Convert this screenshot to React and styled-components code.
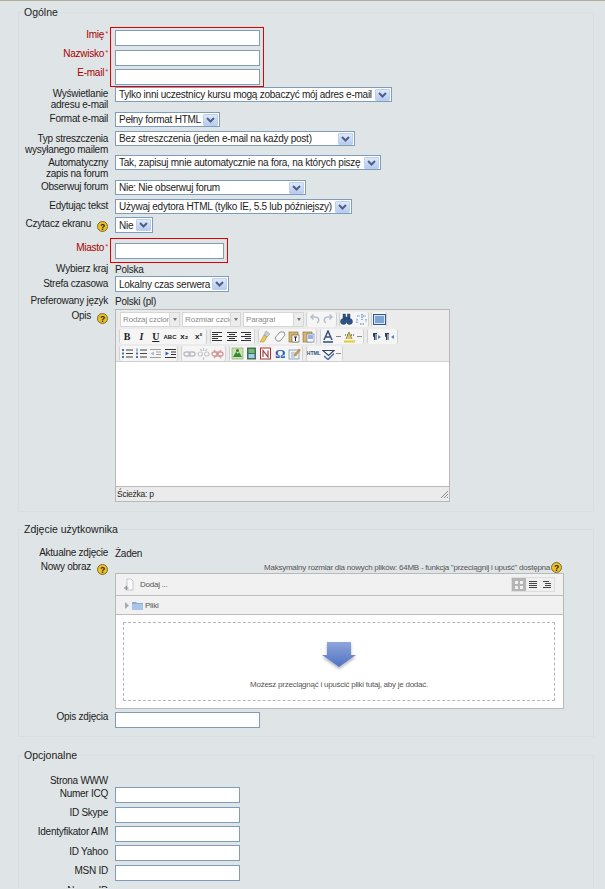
import React from 'react'
import styled, { createGlobalStyle } from 'styled-components'

const Global = createGlobalStyle`
  html, body {
    margin: 0;
    padding: 0;
    height: 889px;
    overflow: hidden;
    background: #dfe4e6;
  }
  body {
    font-family: 'Liberation Sans', Arial, sans-serif;
    font-size: 10px;
    letter-spacing: -0.25px;
    color: #1c1c1c;
  }
`

const Page = styled.div`
  border-top: 1px solid #b3ad9e;
  padding: 0 11px 0 18px;
  height: 888px;
  overflow: hidden;
  box-sizing: border-box;
`

const Section = styled.fieldset`
  margin: ${(p) => p.$top}px 0 0;
  padding: ${(p) => p.$pad}px 0 0;
  height: ${(p) => p.$h}px;
  box-sizing: border-box;
  border: 1px solid #d9dedf;
  min-width: 0;
`

const Legend = styled.legend`
  margin-left: 3px;
  padding: 0 2px;
  font-size: 10.5px;
  letter-spacing: 0;
  line-height: 12px;
`

const Row = styled.div`
  display: flex;
  align-items: flex-start;
  height: ${(p) => p.$h}px;
`

const Label = styled.div`
  width: 89px;
  height: ${(p) => (p.$h ? `${p.$h}px` : 'auto')};
  box-sizing: border-box;
  flex: none;
  margin-right: 7px;
  padding-top: ${(p) => p.$pt ?? 0}px;
  text-align: right;
  line-height: 10.5px;
  color: ${(p) => (p.$required ? '#a80000' : '#1c1c1c')};
  white-space: nowrap;

  & sup {
    color: #e03030;
    font-size: 8px;
    line-height: 0;
    vertical-align: 2px;
    margin-left: 1px;
  }
`

const Value = styled.div`
  padding-top: ${(p) => p.$pt ?? 0}px;
  line-height: 11px;
`

const Highlight = styled.div`
  margin-left: -5px;
  padding: ${(p) => p.$pad};
  border: 1px solid #e00000;
  display: flex;
  flex-direction: column;
  gap: ${(p) => p.$gap ?? 0}px;
  align-items: flex-start;
`

const Stack = styled.div`
  display: flex;
  align-items: flex-start;
  height: ${(p) => p.$h}px;
`

const LabelColumn = styled.div`
  display: flex;
  flex-direction: column;
`

const Input = styled.div`
  width: ${(p) => p.$w}px;
  height: ${(p) => p.$hh ?? 16}px;
  box-sizing: border-box;
  background: #fff;
  border: 1px solid #7f9db9;
  outline: 0.5px solid #7f9db9;
  outline-offset: -1px;
  margin-top: ${(p) => p.$mt ?? 0}px;
`

const Select = styled.div`
  width: ${(p) => p.$w}px;
  height: ${(p) => p.$hh ?? 15}px;
  box-sizing: border-box;
  background: #fff;
  border: 1px solid #7f9db9;
  display: flex;
  align-items: center;
  justify-content: space-between;
  padding: 0 1px 0 3px;
  white-space: nowrap;
`

const Chevron = styled.span`
  flex: none;
  width: 15px;
  height: 12px;
  border-radius: 1px;
  border: 1px solid #bcd0ee;
  box-sizing: border-box;
  background: linear-gradient(#dfe8fa, #b8cbef);
  display: flex;
  align-items: center;
  justify-content: center;
`

const HelpWrap = styled.svg`
  flex: none;
  width: 11px;
  height: 11px;
  vertical-align: middle;
`

const LabelHelp = styled.span`
  margin-left: 6px;
  display: inline-block;
  vertical-align: -2px;
  line-height: 0;
`

const Editor = styled.div`
  width: 335px;
  height: 193px;
  box-sizing: border-box;
  border: 1px solid #b8b8b8;
  background: #ebebeb;
  display: flex;
  flex-direction: column;
`

const ToolRow = styled.div`
  display: flex;
  align-items: center;
  height: ${(p) => p.$h}px;
  padding-left: ${(p) => p.$pl ?? 3}px;
  gap: ${(p) => p.$gap ?? 3}px;
  flex: none;
`

const ToolSelect = styled.div`
  width: ${(p) => p.$w}px;
  height: 15px;
  box-sizing: border-box;
  border: 1px solid #d6d6d6;
  background: #fff;
  color: #8a8a8a;
  font-size: 8px;
  letter-spacing: -0.15px;
  line-height: 13px;
  padding-left: 2px;
  display: flex;
  justify-content: space-between;
  overflow: hidden;
  white-space: nowrap;

  & > span:first-child {
    min-width: 0;
    overflow: hidden;
  }
`

const ToolArrow = styled.span`
  flex: none;
  width: 9px;
  height: 13px;
  background: #ececec;
  border-left: 1px solid #d6d6d6;
  display: flex;
  align-items: center;
  justify-content: center;

  &::after {
    content: '';
    border-top: 3px solid #777;
    border-left: 2px solid transparent;
    border-right: 2px solid transparent;
  }
`

const ToolGroup = styled.div`
  display: flex;
  align-items: center;
  height: 15px;
  background: #f5f5f5;
  border-left: 1px solid #d2d2d2;
  border-right: 1px solid #d2d2d2;
  border-radius: 2px;
`

const ToolBtn = styled.span`
  width: 14.3px;
  height: 15px;
  flex: none;
  display: flex;
  align-items: center;
  justify-content: center;
  font-family: ${(p) => (p.$serif ? "'Liberation Serif', serif" : 'inherit')};
  font-weight: ${(p) => (p.$bold ? 700 : 400)};
  font-style: ${(p) => (p.$italic ? 'italic' : 'normal')};
  text-decoration: ${(p) => (p.$under ? 'underline' : 'none')};
  font-size: ${(p) => p.$fs ?? 9}px;
  color: ${(p) => p.$color ?? '#222'};
  line-height: 1;
  letter-spacing: 0;
  overflow: hidden;
`

const MiniArrow = styled.span`
  width: 7px;
  height: 15px;
  flex: none;
  display: flex;
  align-items: center;
  justify-content: center;

  &::after {
    content: '';
    width: 5px;
    height: 1px;
    background: #888;
  }
`

const EditArea = styled.div`
  flex: 1;
  background: #fff;
  border-top: 1px solid #d0d0d0;
  border-bottom: 1px solid #b8b8b8;
`

const StatusBar = styled.div`
  height: 14px;
  flex: none;
  display: flex;
  align-items: center;
  justify-content: space-between;
  padding-left: 1px;
  font-size: 8.5px;
  color: #222;
`

const HintRow = styled.div`
  flex: 1;
  margin-right: 31px;
  display: flex;
  justify-content: flex-end;
  align-items: center;
  gap: 1px;
  height: 11px;
  font-size: 8px;
  color: #555;
  white-space: nowrap;
`

const Picker = styled.div`
  width: 449px;
  height: 136px;
  box-sizing: border-box;
  border: 1px solid #b9b9b9;
  background: #fff;
  display: flex;
  flex-direction: column;
`

const PickerBar = styled.div`
  height: ${(p) => p.$h}px;
  flex: none;
  box-sizing: border-box;
  background: #f1f1f1;
  border-bottom: 1px solid #bdbdbd;
  display: flex;
  align-items: center;
  padding: 0 8px;
  gap: ${(p) => p.$gap ?? 5}px;
  font-size: 8px;
  color: #555;
`

const ViewToggle = styled.div`
  margin-left: auto;
  display: flex;
  height: 15px;
  border: 1px solid #dedede;
  box-sizing: border-box;
`

const ViewBtn = styled.span`
  width: 14px;
  display: flex;
  align-items: center;
  justify-content: center;
  background: ${(p) => (p.$active ? '#b5b5b5' : '#efefef')};
`

const DropZone = styled.div`
  flex: 1;
  margin: 7px 8px 7px 7px;
  border: 1px dashed #b5b5b5;
  display: flex;
  flex-direction: column;
  align-items: center;
  font-size: 8px;
  color: #555;
  white-space: nowrap;
`

const DropArrow = styled.svg`
  margin-top: 18px;
  width: 36px;
  height: 32px;
`

const DropText = styled.div`
  margin-top: 7px;
`

function Help() {
  return (
    <HelpWrap viewBox="0 0 11 11">
      <circle cx="5.5" cy="5.5" r="5" fill="#f0c020" stroke="#7a6a30" strokeWidth="1" />
      <text x="5.5" y="8.5" textAnchor="middle" fontSize="8.5" fontWeight="700" fontFamily="Liberation Sans" fill="#222">?</text>
    </HelpWrap>
  )
}

function ChevronIcon() {
  return (
    <Chevron>
      <svg width="9" height="6" viewBox="0 0 9 6">
        <path d="M1 1 L4.5 4.5 L8 1" fill="none" stroke="#4d6185" strokeWidth="2" />
      </svg>
    </Chevron>
  )
}

function Sel({ w, h, children }) {
  return (
    <Select $w={w} $hh={h}>
      <span>{children}</span>
      <ChevronIcon />
    </Select>
  )
}

const icons = {
  center: (
    <g stroke="#333" strokeWidth="1">
      <path d="M1 2.5h10M3 4.5h6M1 6.5h10M3 8.5h6M1 10.5h10" />
    </g>
  ),
  right: (
    <g stroke="#333" strokeWidth="1">
      <path d="M1 2.5h10M5 4.5h6M1 6.5h10M5 8.5h6M1 10.5h10" />
    </g>
  ),
  left: (
    <g stroke="#333" strokeWidth="1">
      <path d="M1 2.5h10M1 4.5h6M1 6.5h10M1 8.5h6M1 10.5h10" />
    </g>
  ),
  brush: (
    <g>
      <path d="M7 1l4 3-3 3-3-2z" fill="#c9cdd8" stroke="#888" strokeWidth=".5" />
      <path d="M5 5l3 2-3 5H1z" fill="#e9c85a" stroke="#a08830" strokeWidth=".5" />
    </g>
  ),
  eraser: <path d="M1 8l5-6h4l1 3-5 6H3z" fill="#fafafa" stroke="#777" strokeWidth=".8" />,
  paste: (
    <g>
      <rect x="1" y="2" width="9" height="10" fill="#d9b66a" stroke="#85682a" strokeWidth=".6" />
      <rect x="4" y="5" width="7" height="7" fill="#fff" stroke="#555" strokeWidth=".6" />
      <path d="M6 7h3M7.500 7v4" stroke="#223" strokeWidth="1" />
    </g>
  ),
  pasteWord: (
    <g>
      <rect x="1" y="2" width="9" height="10" fill="#d9b66a" stroke="#85682a" strokeWidth=".6" />
      <rect x="5" y="4" width="7" height="8" fill="#fff" stroke="#4a6fb5" strokeWidth=".6" />
      <path d="M6 6h5M6 8h5" stroke="#3a5fd0" strokeWidth="1" />
    </g>
  ),
  textColor: (
    <g>
      <path d="M2 10L6 1l4 9M4 7h4" fill="none" stroke="#39507f" strokeWidth="1.5" />
      <path d="M1 12h10" stroke="#33477a" strokeWidth="1.5" />
    </g>
  ),
  highlight: (
    <g>
      <path d="M2 5h9" stroke="#222" strokeWidth="1" strokeDasharray="1 1" />
      <path d="M3 9l3-7 3 7" fill="#dcc860" stroke="#75702a" strokeWidth=".7" />
      <path d="M1 11.500h11" stroke="#e6c92a" strokeWidth="2" />
    </g>
  ),
  ltr: (
    <g fill="#2b3f5c">
      <path d="M4 3h4v1H7.500v6h-1V4h-.5v6H5V7L4 6.500z" />
      <path d="M9 5l3 2-3 2z" fill="#4a80c8" />
    </g>
  ),
  rtl: (
    <g fill="#2b3f5c">
      <path d="M2 3h4v1H5.500v6h-1V4H4v6H3V7L2 6.500z" />
      <path d="M11 5L8 7l3 2z" fill="#4a80c8" />
    </g>
  ),
  bullets: (
    <g>
      <path d="M5 3h7M5 6.500h7M5 10h7" stroke="#444" />
      <path d="M1 2h2v2H1zM1 5.500h2v2H1zM1 9h2v2H1z" fill="#4a74b0" />
    </g>
  ),
  numbers: (
    <g>
      <path d="M5 3h7M5 6.500h7M5 10h7" stroke="#444" />
      <path d="M1.500 1.500h1v3h-1zM1 5.500h2v2H1zM1 9h2v2H1z" fill="#4a74b0" />
    </g>
  ),
  outdent: (
    <g opacity=".45">
      <path d="M1 2.500h11M7 5h5M7 7.500h5M1 10.500h11" stroke="#333" />
      <path d="M5 4.500L1.500 6.500 5 8.500z" fill="#4a74b0" />
    </g>
  ),
  indent: (
    <g>
      <path d="M1 2.500h11M7 5h5M7 7.500h5M1 10.500h11" stroke="#333" />
      <path d="M1.500 4.500L5 6.500 1.500 8.500z" fill="#2f62c0" />
    </g>
  ),
  link: (
    <g fill="none" stroke="#b9bcc4" strokeWidth="1.400">
      <rect x="1" y="5" width="6" height="4" rx="2" />
      <rect x="6" y="5" width="6" height="4" rx="2" />
    </g>
  ),
  unlink: (
    <g fill="none" stroke="#c4c6cc" strokeWidth="1.200">
      <rect x="1" y="5" width="4.500" height="4" rx="2" />
      <rect x="7.500" y="5" width="4.500" height="4" rx="2" />
      <path d="M6.500 1v3M6.500 10v3M3 2l2 2M10 2L8 4" />
    </g>
  ),
  anchor: (
    <g fill="none" strokeWidth="1.300">
      <rect x="1" y="5" width="6" height="4" rx="2" stroke="#c99" />
      <rect x="6" y="5" width="6" height="4" rx="2" stroke="#c99" />
      <path d="M3 3l7 8M10 3l-7 8" stroke="#d89a9a" />
    </g>
  ),
  image: (
    <g>
      <rect x="1" y="1" width="11" height="11" fill="#cde0b0" stroke="#7aa060" strokeWidth=".6" />
      <path d="M2 10l3-5 2 2 1-2 3 5z" fill="#2e8a3a" />
      <circle cx="6.500" cy="3.500" r="1.500" fill="#3c7a2c" />
    </g>
  ),
  media: (
    <g>
      <rect x="2" y="0.500" width="9" height="12" fill="#4c6a5a" />
      <rect x="3.500" y="2" width="6" height="4" fill="#6ac070" />
      <rect x="3.500" y="7" width="6" height="4" fill="#9ad0e8" />
    </g>
  ),
  nonbreak: (
    <g>
      <rect x="1.500" y="1" width="10" height="11" fill="#fff" stroke="#b03030" />
      <path d="M4 10V3.500L9 10V3.500" fill="none" stroke="#a04040" strokeWidth="1.200" />
    </g>
  ),
  edit: (
    <g>
      <rect x="1" y="3" width="10" height="9" fill="#eef3f8" stroke="#6a87a8" strokeWidth=".7" />
      <path d="M3 6h6M3 8h6M3 10h4" stroke="#7a90a8" strokeWidth=".7" />
      <path d="M6 8l5-6 1.500 1-5 6z" fill="#d0a040" stroke="#85682a" strokeWidth=".4" />
    </g>
  ),
  spell: (
    <g>
      <path d="M1 3.500h11l-5.500 5z" fill="#fff" stroke="#3b4a6b" strokeWidth="1.200" />
      <path d="M2 9l4 3.500 6-6" fill="none" stroke="#4a6fa8" strokeWidth="1.500" />
    </g>
  ),
  undo: <path d="M9 10c3-2 2-6-2-6H4M5.500 1.500L3 4l2.500 2.500" fill="none" stroke="#b6c0cc" strokeWidth="1.500" />,
  redo: <path d="M4 10c-3-2-2-6 2-6h3M7.500 1.500L10 4 7.500 6.500" fill="none" stroke="#b6c0cc" strokeWidth="1.500" />,
  find: (
    <g fill="#2f5486" stroke="#1e3555" strokeWidth=".4">
      <rect x="3" y="1" width="2.500" height="5" />
      <rect x="7.500" y="1" width="2.500" height="5" />
      <circle cx="3.500" cy="8.500" r="3" />
      <circle cx="9.500" cy="8.500" r="3" />
      <rect x="5" y="4" width="3" height="3" />
    </g>
  ),
  replace: (
    <g>
      <path d="M2 3h3M8 3h3M2 6v4M11 6v3" stroke="#7fa4d6" strokeWidth="1.400" strokeDasharray="1.500 1" />
      <path d="M5 11h5M7 1v6" stroke="#4878b8" strokeWidth="1.200" strokeDasharray="1.500 1" />
    </g>
  ),
  full: (
    <g>
      <rect x="0.500" y="1.500" width="12" height="10" fill="#dbe7f5" stroke="#2f5a90" />
      <rect x="2" y="3" width="9" height="7" fill="#7ea4d6" />
    </g>
  )
}

function Ic({ name }) {
  return (
    <svg width="13" height="13" viewBox="0 0 13 13">
      {icons[name]}
    </svg>
  )
}

function Btns({ names }) {
  return names.map((n) => (
    <ToolBtn key={n}>
      <Ic name={n} />
    </ToolBtn>
  ))
}

function ToolbarSelect({ w, children }) {
  return (
    <ToolSelect $w={w}>
      <span>{children}</span>
      <ToolArrow />
    </ToolSelect>
  )
}

function EditorBox() {
  return (
    <Editor>
      <ToolRow $h={18} $pl={4} $gap={2}>
        <ToolbarSelect w={60}>Rodzaj czcionki</ToolbarSelect>
        <ToolbarSelect w={59}>Rozmiar czcionki</ToolbarSelect>
        <ToolbarSelect w={61}>Paragraf</ToolbarSelect>
        <ToolGroup>
          <Btns names={['undo', 'redo']} />
        </ToolGroup>
        <ToolGroup>
          <Btns names={['find', 'replace']} />
        </ToolGroup>
        <ToolGroup>
          <Btns names={['full']} />
        </ToolGroup>
      </ToolRow>
      <ToolRow $h={17} $pl={3} $gap={3}>
        <ToolGroup>
          <ToolBtn $bold $serif $fs={10}>B</ToolBtn>
          <ToolBtn $italic $serif $bold $fs={10}>I</ToolBtn>
          <ToolBtn $under $bold $serif $fs={10}>U</ToolBtn>
          <ToolBtn $fs={6} $bold>ABC</ToolBtn>
          <ToolBtn $fs={8} $bold>x₂</ToolBtn>
          <ToolBtn $fs={8} $bold>x²</ToolBtn>
        </ToolGroup>
        <ToolGroup>
          <Btns names={['left', 'center', 'right']} />
        </ToolGroup>
        <ToolGroup>
          <Btns names={['brush', 'eraser', 'paste', 'pasteWord']} />
        </ToolGroup>
        <ToolGroup>
          <ToolBtn><Ic name="textColor" /></ToolBtn>
          <MiniArrow />
          <ToolBtn><Ic name="highlight" /></ToolBtn>
          <MiniArrow />
        </ToolGroup>
        <ToolGroup>
          <Btns names={['ltr', 'rtl']} />
        </ToolGroup>
      </ToolRow>
      <ToolRow $h={16} $pl={3} $gap={3}>
        <ToolGroup>
          <Btns names={['bullets', 'numbers', 'outdent', 'indent']} />
        </ToolGroup>
        <ToolGroup>
          <Btns names={['link', 'unlink', 'anchor']} />
        </ToolGroup>
        <ToolGroup>
          <Btns names={['image', 'media', 'nonbreak']} />
          <ToolBtn $fs={13} $bold $color="#2f5da8" $serif>Ω</ToolBtn>
          <Btns names={['edit']} />
        </ToolGroup>
        <ToolGroup>
          <ToolBtn $fs={5} $bold $color="#34507f">HTML</ToolBtn>
          <ToolBtn><Ic name="spell" /></ToolBtn>
          <MiniArrow />
        </ToolGroup>
      </ToolRow>
      <EditArea />
      <StatusBar>
        <span>Ścieżka: p</span>
        <svg width="10" height="10" viewBox="0 0 10 10">
          <path d="M9 2L2 9M9 5L5 9M9 8L8 9" stroke="#8a8a8a" strokeWidth="1" />
        </svg>
      </StatusBar>
    </Editor>
  )
}

function FilePicker() {
  return (
    <Picker>
      <PickerBar $h={22}>
        <svg width="11" height="15" viewBox="0 0 11 15">
          <path d="M3 2h4l2 2v9H3z" fill="#fafafa" stroke="#c8c8c8" />
          <path d="M0 11h4.500M2.250 8.750v4.500" stroke="#8a8a8a" strokeWidth="1.200" />
        </svg>
        <span>Dodaj ...</span>
        <ViewToggle>
          <ViewBtn $active>
            <svg width="10" height="10" viewBox="0 0 10 10">
              <path d="M1 1h3v3H1zM6 1h3v3H6zM1 6h3v3H1zM6 6h3v3H6z" fill="#f2f2f2" />
            </svg>
          </ViewBtn>
          <ViewBtn>
            <svg width="10" height="10" viewBox="0 0 10 10">
              <path d="M1 1.500h8M1 3.500h8M1 5.500h8M1 7.500h8" stroke="#444" />
            </svg>
          </ViewBtn>
          <ViewBtn>
            <svg width="10" height="10" viewBox="0 0 10 10">
              <path d="M1 1.500h6M3 3.500h6M3 5.500h6M1 7.500h8" stroke="#444" />
            </svg>
          </ViewBtn>
        </ViewToggle>
      </PickerBar>
      <PickerBar $h={19} $gap={2}>
        <svg width="6" height="7" viewBox="0 0 6 7">
          <path d="M1 0l4 3.500L1 7z" fill="#aaa" />
        </svg>
        <svg width="11" height="9" viewBox="0 0 11 9">
          <path d="M0 1h4l1 1h6v7H0z" fill="#88acd8" />
          <path d="M0 3h11v6H0z" fill="#a9c6e8" />
        </svg>
        <span>Pliki</span>
      </PickerBar>
      <DropZone>
        <DropArrow viewBox="0 0 36 32">
          <defs>
            <linearGradient id="dropFill" x1="0" y1="0" x2="0" y2="1">
              <stop offset="0" stopColor="#8ea6da" />
              <stop offset="1" stopColor="#4f72c2" />
            </linearGradient>
            <filter id="dropShadow" x="-20%" y="-20%" width="140%" height="150%">
              <feDropShadow dx="0" dy="2" stdDeviation="1.500" floodColor="#000" floodOpacity="0.3" />
            </filter>
          </defs>
          <path d="M6 1h24v13h5L18 26 1 14h5z" fill="url(#dropFill)" filter="url(#dropShadow)" />
        </DropArrow>
        <DropText>Możesz przeciągnąć i upuścić pliki tutaj, aby je dodać.</DropText>
      </DropZone>
    </Picker>
  )
}

export default function App() {
  return (
    <Page>
      <Global />
      <Section $top={5} $pad={9} $h={506}>
        <Legend>Ogólne</Legend>
        <Stack $h={60}>
          <LabelColumn>
            <Label $required $pt={3} $h={19}>Imię<sup>*</sup></Label>
            <Label $required $pt={3} $h={19}>Nazwisko<sup>*</sup></Label>
            <Label $required $pt={3} $h={19}>E-mail<sup>*</sup></Label>
          </LabelColumn>
          <Highlight $pad="2px 3px 1px 4px" $gap={3.5}>
            <Input $w={145} />
            <Input $w={145} />
            <Input $w={145} />
          </Highlight>
        </Stack>
        <Row $h={25}>
          <Label $pt={2}>Wyświetlanie<br />adresu e-mail</Label>
          <Sel w={277}>Tylko inni uczestnicy kursu mogą zobaczyć mój adres e-mail</Sel>
        </Row>
        <Row $h={19}>
          <Label $pt={2}>Format e-mail</Label>
          <Sel w={105}>Pełny format HTML</Sel>
        </Row>
        <Row $h={24}>
          <Label $pt={3}>Typ streszczenia<br />wysyłanego mailem</Label>
          <Sel w={240}>Bez streszczenia (jeden e-mail na każdy post)</Sel>
        </Row>
        <Row $h={25}>
          <Label $pt={3}>Automatyczny<br />zapis na forum</Label>
          <Sel w={266}>Tak, zapisuj mnie automatycznie na fora, na których piszę</Sel>
        </Row>
        <Row $h={19}>
          <Label $pt={2}>Obserwuj forum</Label>
          <Sel w={191}>Nie: Nie obserwuj forum</Sel>
        </Row>
        <Row $h={18}>
          <Label $pt={2}>Edytując tekst</Label>
          <Sel w={237}>Używaj edytora HTML (tylko IE, 5.5 lub późniejszy)</Sel>
        </Row>
        <Row $h={21}>
          <Label $pt={2}>Czytacz ekranu<LabelHelp><Help /></LabelHelp></Label>
          <Sel w={38} h={16}>Nie</Sel>
        </Row>
        <Row $h={26}>
          <Label $required $pt={5}>Miasto<sup>*</sup></Label>
          <Highlight $pad="4px 3px 3px 4px">
            <Input $w={109} />
          </Highlight>
        </Row>
        <Row $h={12}>
          <Label>Wybierz kraj</Label>
          <Value>Polska</Value>
        </Row>
        <Row $h={19}>
          <Label $pt={3}>Strefa czasowa</Label>
          <Sel w={114} h={16}>Lokalny czas serwera</Sel>
        </Row>
        <Row $h={14}>
          <Label $pt={1}>Preferowany język</Label>
          <Value $pt={1}>Polski (pl)</Value>
        </Row>
        <Row $h={193}>
          <Label $pt={2}>Opis<LabelHelp><Help /></LabelHelp></Label>
          <EditorBox />
        </Row>
      </Section>
      <Section $top={11} $pad={13} $h={214}>
        <Legend>Zdjęcie użytkownika</Legend>
        <Row $h={14}>
          <Label>Aktualne zdjęcie</Label>
          <Value>Żaden</Value>
        </Row>
        <Row $h={11}>
          <Label>Nowy obraz<LabelHelp><Help /></LabelHelp></Label>
          <HintRow>
            <span>Maksymalny rozmiar dla nowych plików: 64MB - funkcja "przeciągnij i upuść" dostępna</span>
            <Help />
          </HintRow>
        </Row>
        <Row $h={139}>
          <Label />
          <FilePicker />
        </Row>
        <Row $h={16}>
          <Label>Opis zdjęcia</Label>
          <Input $w={145} />
        </Row>
      </Section>
      <Section $top={12} $pad={13} $h={200}>
        <Legend>Opcjonalne</Legend>
        <Row $h={13}>
          <Label $pt={2}>Strona WWW</Label>
        </Row>
        <Row $h={19.5}>
          <Label $pt={2}>Numer ICQ</Label>
          <Input $w={125} />
        </Row>
        <Row $h={19.5}>
          <Label $pt={1}>ID Skype</Label>
          <Input $w={125} />
        </Row>
        <Row $h={19}>
          <Label $pt={1}>Identyfikator AIM</Label>
          <Input $w={125} />
        </Row>
        <Row $h={19.5}>
          <Label $pt={2}>ID Yahoo</Label>
          <Input $w={125} />
        </Row>
        <Row $h={19}>
          <Label $pt={1}>MSN ID</Label>
          <Input $w={125} />
        </Row>
        <Row $h={12}>
          <Label $pt={2}>Numer ID</Label>
        </Row>
      </Section>
    </Page>
  )
}
